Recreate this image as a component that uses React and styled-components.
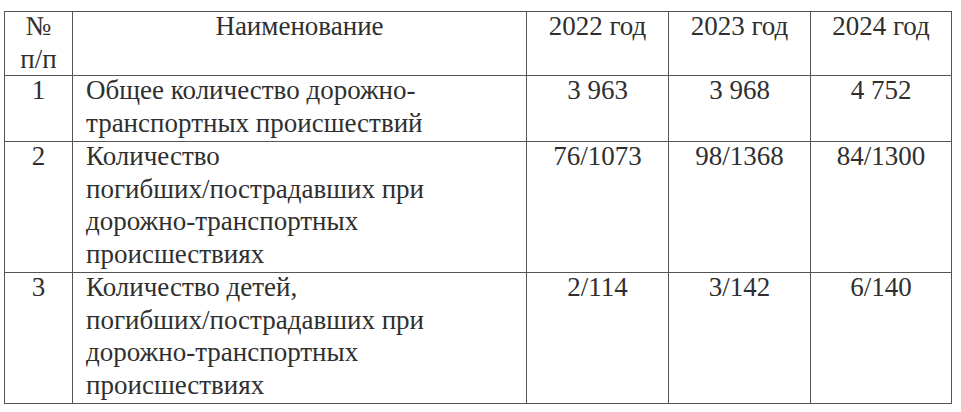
import React from 'react'
import styled, { createGlobalStyle } from 'styled-components'

const GlobalStyle = createGlobalStyle`
  html, body {
    margin: 0;
    padding: 0;
    background: #fff;
    font-family: 'Liberation Serif', 'Times New Roman', serif;
  }
`

// "/" joined with a word joiner so the line does not wrap after the slash
const J = '/\u2060'

const rows = [
  {
    num: '1',
    name: 'Общее количество дорожно-транспортных происшествий',
    values: ['3 963', '3 968', '4 752']
  },
  {
    num: '2',
    name: `Количество погибших${J}пострадавших при дорожно-транспортных происшествиях`,
    values: ['76/1073', '98/1368', '84/1300']
  },
  {
    num: '3',
    name: `Количество детей, погибших${J}пострадавших при дорожно-транспортных происшествиях`,
    values: ['2/114', '3/142', '6/140']
  }
]

const years = ['2022 год', '2023 год', '2024 год']

const App = () => {
  return (
    <Page>
      <GlobalStyle />
      <Table>
        <Cell $center $head>
          <Text>
            №
            <br />
            п/п
          </Text>
        </Cell>
        <Cell $center $head>
          <Text>Наименование</Text>
        </Cell>
        {years.map((y) => (
          <Cell $center $head key={y}>
            <Text>{y}</Text>
          </Cell>
        ))}

        {rows.map((row) => (
          <React.Fragment key={row.num}>
            <Cell $center>
              <Text>{row.num}</Text>
            </Cell>
            <Cell>
              <Text>{row.name}</Text>
            </Cell>
            {row.values.map((v, i) => (
              <Cell $center key={i}>
                <Text>{v}</Text>
              </Cell>
            ))}
          </React.Fragment>
        ))}
      </Table>
    </Page>
  )
}

const Page = styled.div`
  padding: 11px 0 0 4px;
  width: 961px;
  height: 412px;
  box-sizing: border-box;
  background: #fff;
`

const Table = styled.div`
  display: grid;
  grid-template-columns: 68px 454px 142px 142px 141px;
  width: max-content;
  border-top: 1px solid #555;
  border-left: 1px solid #555;
`

const Cell = styled.div`
  box-sizing: border-box;
  border-right: 1px solid #555;
  border-bottom: 1px solid #555;
  padding: 0 13px ${({ $head }) => ($head ? '0' : '2px')} 13px;
  text-align: ${({ $center }) => ($center ? 'center' : 'left')};
  font-family: 'Liberation Serif', 'Times New Roman', serif;
  font-size: 27px;
  line-height: 32.5px;
  color: #2f2f2f;
`

const Text = styled.div`
  margin-top: -2px;
`

export default App
